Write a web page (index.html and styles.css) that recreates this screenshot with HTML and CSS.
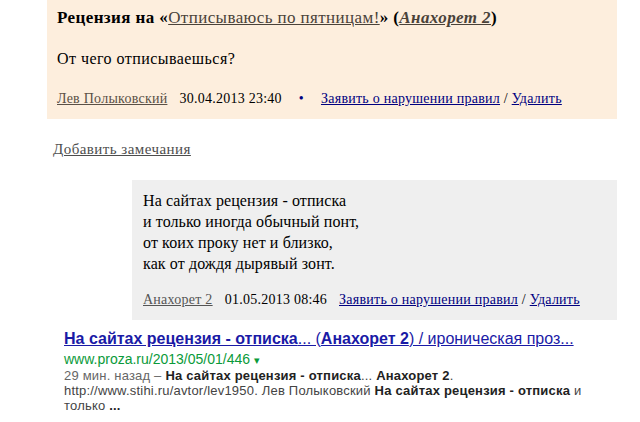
FILE: index.html
```html
<!DOCTYPE html>
<html>

<head>
  <meta charset="utf-8">
  <title>Рецензия на «Отписываюсь по пятницам!»</title>
  <link rel="stylesheet" href="styles.css">
</head>

<body>
  <div class="review">
    <p class="title">Рецензия на «<a class="work" href="#">Отписываюсь по пятницам!</a>» (<a class="author" href="#">Анахорет 2</a>)</p>
    <p class="text">От чего отписываешься?</p>
    <p class="meta">
      <a class="name" href="#">Лев Полыковский</a><span class="date">30.04.2013 23:40</span><span class="dot">•</span><a class="act" href="#">Заявить о нарушении правил</a> / <a class="act" href="#">Удалить</a>
    </p>
  </div>

  <p class="add"><a href="#">Добавить замечания</a></p>

  <div class="reply">
    <p class="poem">На сайтах рецензия - отписка<br>и только иногда обычный понт,<br>от коих проку нет и близко,<br>как от дождя дырявый зонт.</p>
    <p class="meta">
      <a class="name" href="#">Анахорет 2</a><span class="date">01.05.2013 08:46</span><a class="act" href="#">Заявить о нарушении правил</a> / <a class="act" href="#">Удалить</a>
    </p>
  </div>

  <div class="result">
    <a class="r-title" href="#"><b>На сайтах рецензия - отписка</b>... (<b>Анахорет 2</b>) / ироническая проз...</a>
    <div class="r-url">www.proza.ru/2013/05/01/446 <span class="arrow">▾</span></div>
    <div class="r-snip"><span class="ago">29 мин. назад –</span> <b>На сайтах рецензия - отписка</b>... <b>Анахорет 2</b>.<br>http://www.stihi.ru/avtor/lev1950. Лев Полыковский <b>На сайтах рецензия - отписка</b> и<br>только <b>...</b></div>
  </div>
</body>

</html>
```

FILE: styles.css
```css
body {
  margin: 0;
  font-family: "Liberation Serif", "Times New Roman", serif;
  color: #000;
  background: #fff;
}

p {
  margin: 0;
}

.review {
  margin-left: 47px;
  width: 550px;
  padding: 9px 10px 11px 10px;
  background: #fdeedd;
}

.title {
  font-size: 17px;
  font-weight: bold;
  line-height: 18px;
  letter-spacing: 0.4px;
}

.title a {
  color: #4a4239;
}

.title .work {
  font-weight: normal;
}

.title .author {
  font-style: italic;
}

.text {
  margin-top: 23px;
  font-size: 16px;
  line-height: 18px;
  letter-spacing: 0.45px;
}

.meta {
  font-size: 14px;
  line-height: 18px;
  letter-spacing: 0.25px;
}

.review .meta {
  margin-top: 22px;
}

.meta .name {
  color: #5a5046;
}

.meta .date {
  margin: 0 12px;
}

.meta .dot {
  color: #000080;
  margin: 0 17px 0 5px;
}

.meta .act {
  color: #000080;
}

.add {
  margin: 21px 0 0 53px;
  font-size: 15px;
  line-height: 18px;
  letter-spacing: 0.45px;
}

.add a {
  color: #4d4d4d;
}

.reply {
  margin: 22px 0 0 132px;
  width: 474px;
  padding: 10px 0 11px 11px;
  background: #efefef;
}

.poem {
  font-size: 16px;
  line-height: 21px;
  letter-spacing: 0.1px;
}

.reply .meta {
  margin-top: 17px;
}

.reply .meta .name {
  color: #555;
}

.result {
  margin: 9px 0 0 64px;
  font-family: "Liberation Sans", Arial, sans-serif;
}

.r-title {
  display: block;
  font-size: 16px;
  line-height: 20px;
  color: #1a1aa6;
  white-space: nowrap;
}

.r-url {
  margin-top: 2px;
  font-size: 14px;
  line-height: 16px;
  color: #0a9a3a;
}

.arrow {
  font-size: 11px;
}

.r-snip {
  font-size: 13px;
  line-height: 15px;
  letter-spacing: 0.2px;
  color: #444;
}

.r-snip .ago {
  color: #666;
}

.r-snip b {
  color: #222;
}
```
